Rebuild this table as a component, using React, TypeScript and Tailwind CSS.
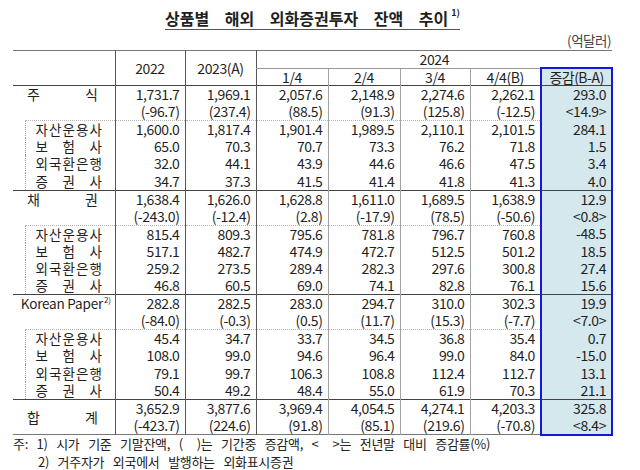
import React from 'react';

const BLUE = 'border-[#1616dc]';

// per data column: 2022, 2023(A), 1/4, 2/4, 3/4, 4/4(B), 증감(B-A)
const colCls = [
  'border-l border-l-[#555]',
  'border-l border-l-[#555]',
  'border-l border-l-[#555]',
  'border-l border-l-[#a3a3a3]',
  'border-l border-l-[#a3a3a3]',
  'border-l border-l-[#a3a3a3]',
  'border-x-2 border-x-[#1616dc] bg-[#d5e8ed]',
];

type Group = {
  label: string[];
  paper?: boolean;
  total?: boolean;
  values: string[];
  changes: string[];
  subs: string[][];
};

const groups: Group[] = [
  {
    label: ['주', '식'],
    values: ['1,731.7', '1,969.1', '2,057.6', '2,148.9', '2,274.6', '2,262.1', '293.0'],
    changes: ['(-96.7)', '(237.4)', '(88.5)', '(91.3)', '(125.8)', '(-12.5)', '<14.9>'],
    subs: [
      ['자산운용사', '1,600.0', '1,817.4', '1,901.4', '1,989.5', '2,110.1', '2,101.5', '284.1'],
      ['보 험 사', '65.0', '70.3', '70.7', '73.3', '76.2', '71.8', '1.5'],
      ['외국환은행', '32.0', '44.1', '43.9', '44.6', '46.6', '47.5', '3.4'],
      ['증 권 사', '34.7', '37.3', '41.5', '41.4', '41.8', '41.3', '4.0'],
    ],
  },
  {
    label: ['채', '권'],
    values: ['1,638.4', '1,626.0', '1,628.8', '1,611.0', '1,689.5', '1,638.9', '12.9'],
    changes: ['(-243.0)', '(-12.4)', '(2.8)', '(-17.9)', '(78.5)', '(-50.6)', '<0.8>'],
    subs: [
      ['자산운용사', '815.4', '809.3', '795.6', '781.8', '796.7', '760.8', '-48.5'],
      ['보 험 사', '517.1', '482.7', '474.9', '472.7', '512.5', '501.2', '18.5'],
      ['외국환은행', '259.2', '273.5', '289.4', '282.3', '297.6', '300.8', '27.4'],
      ['증 권 사', '46.8', '60.5', '69.0', '74.1', '82.8', '76.1', '15.6'],
    ],
  },
  {
    label: ['Korean Paper'],
    paper: true,
    values: ['282.8', '282.5', '283.0', '294.7', '310.0', '302.3', '19.9'],
    changes: ['(-84.0)', '(-0.3)', '(0.5)', '(11.7)', '(15.3)', '(-7.7)', '<7.0>'],
    subs: [
      ['자산운용사', '45.4', '34.7', '33.7', '34.5', '36.8', '35.4', '0.7'],
      ['보 험 사', '108.0', '99.0', '94.6', '96.4', '99.0', '84.0', '-15.0'],
      ['외국환은행', '79.1', '99.7', '106.3', '108.8', '112.4', '112.7', '13.1'],
      ['증 권 사', '50.4', '49.2', '48.4', '55.0', '61.9', '70.3', '21.1'],
    ],
  },
  {
    label: ['합', '계'],
    total: true,
    values: ['3,652.9', '3,877.6', '3,969.4', '4,054.5', '4,274.1', '4,203.3', '325.8'],
    changes: ['(-423.7)', '(224.6)', '(91.8)', '(85.1)', '(219.6)', '(-70.8)', '<8.4>'],
    subs: [],
  },
];

const num = 'p-0 pr-[5px] text-right h-[17.3px] leading-[17px] whitespace-nowrap';
const head = 'p-0 h-[15.5px] leading-[16px] font-normal text-center';

const Spread = ({ chars, className }: { chars: string[]; className: string }) => (
  <div className={`flex justify-between leading-[17px] ${className}`}>
    {chars.map((c, i) => (
      <span key={i}>{c}</span>
    ))}
  </div>
);

export default function App() {
  return (
    <div className="w-[640px] h-[470px] bg-white text-[#1f1f1f] font-['Noto_Sans_CJK_KR','Noto_Sans',sans-serif] overflow-hidden">
      <div className="ml-[13px] w-[599px] pt-[8px] text-center leading-[20px]">
        <span className="inline-block border-b border-[#555] pb-[1px] text-[16px] leading-[20px] font-bold [word-spacing:12px]">
          상품별 해외 외화증권투자 잔액 추이
          <span className="inline-block align-top text-[9px] leading-[10px] ml-[3px] [word-spacing:0px]">1)</span>
        </span>
      </div>
      <div className="ml-[13px] w-[599px] text-right text-[13.5px] leading-[16px] text-[#444] pr-[1px] tracking-[-0.5px] mt-[2px]">
        (억달러)
      </div>

      <table className="ml-[13px] mt-[2px] w-[599px] table-fixed border-collapse border-t border-t-[#777] border-b border-b-[#777] text-[14px] tracking-[-0.4px] leading-[17px]">
        <colgroup>
          <col className="w-[12px]" />
          <col className="w-[90px]" />
          <col className="w-[70px]" />
          <col className="w-[71px]" />
          <col className="w-[72px]" />
          <col className="w-[72px]" />
          <col className="w-[70px]" />
          <col className="w-[71px]" />
          <col className="w-[71px]" />
        </colgroup>
        <thead>
          <tr>
            <th colSpan={2} rowSpan={2} className="p-0 font-normal" />
            <th rowSpan={2} className={`p-0 font-normal text-center ${colCls[0]}`}>2022</th>
            <th rowSpan={2} className={`p-0 font-normal text-center ${colCls[1]}`}>2023(A)</th>
            <th colSpan={5} className={`${head} border-l border-l-[#555] border-b border-b-[#999]`}>
              2024
            </th>
          </tr>
          <tr>
            {['1/4', '2/4', '3/4', '4/4(B)'].map((h, i) => (
              <th key={h} className={`${head} ${colCls[i + 2]}`}>
                {h}
              </th>
            ))}
            <th className={`${head} border-t-2 ${BLUE} ${colCls[6]} tracking-[-0.5px]`}>증감(B-A)</th>
          </tr>
        </thead>
        <tbody>
          {groups.map((g) => (
            <React.Fragment key={g.label.join('')}>
              <tr>
                <td
                  colSpan={2}
                  rowSpan={g.total ? 2 : 1}
                  className="p-0 border-t border-t-[#444] align-middle"
                >
                  {g.paper ? (
                    <div className="text-center text-[13.5px] leading-[17px] tracking-[-0.2px] pl-[4px]">
                      Korean Paper
                      <span className="inline-block align-top text-[8px] leading-[9px] ml-[1px]">2)</span>
                    </div>
                  ) : (
                    <Spread chars={g.label} className="pl-[14px] pr-[17px] text-[14px]" />
                  )}
                </td>
                {g.values.map((v, i) => (
                  <td key={i} className={`${num} border-t border-t-[#444] ${colCls[i]}`}>
                    {v}
                  </td>
                ))}
              </tr>
              <tr>
                {!g.total && <td colSpan={2} className="p-0" />}
                {g.changes.map((v, i) => (
                  <td
                    key={i}
                    className={`${num} ${colCls[i]} ${g.total && i === 6 ? `border-b-2 ${BLUE}` : ''}`}
                  >
                    {v}
                  </td>
                ))}
              </tr>
              {g.subs.map((s, r) => (
                <tr key={r}>
                  {r === 0 && <td rowSpan={4} className="p-0" />}
                  <td
                    className={`p-0 border-l border-l-[#9a9a9a] [border-left-style:dotted] ${
                      r === 0 ? 'border-t border-t-[#b5b5b5] [border-top-style:dotted]' : ''
                    }`}
                  >
                    <Spread
                      chars={s[0].includes(' ') ? s[0].split(' ') : s[0].split('')}
                      className="pl-[10px] pr-[13px] text-[13.5px]"
                    />
                  </td>
                  {s.slice(1).map((v, i) => (
                    <td
                      key={i}
                      className={`${num} ${colCls[i]} ${
                        r === 0 && i < 6 ? 'border-t border-t-[#b5b5b5] [border-top-style:dotted]' : ''
                      }`}
                    >
                      {v}
                    </td>
                  ))}
                </tr>
              ))}
            </React.Fragment>
          ))}
        </tbody>
      </table>

      <div className="ml-[13px] -mt-[1px] text-[13px] leading-[18px] tracking-[-0.3px] [word-spacing:6px] text-[#222] whitespace-nowrap">
        <div>
          주: 1) 시가 기준 기말잔액, (<span className="inline-block w-[14px]" />)는 기간중 증감액, {'<'}
          <span className="inline-block w-[14px]" />
          {'>'}는 전년말 대비 증감률(%)
        </div>
        <div className="pl-[25px]">2) 거주자가 외국에서 발행하는 외화표시증권</div>
      </div>
    </div>
  );
}
